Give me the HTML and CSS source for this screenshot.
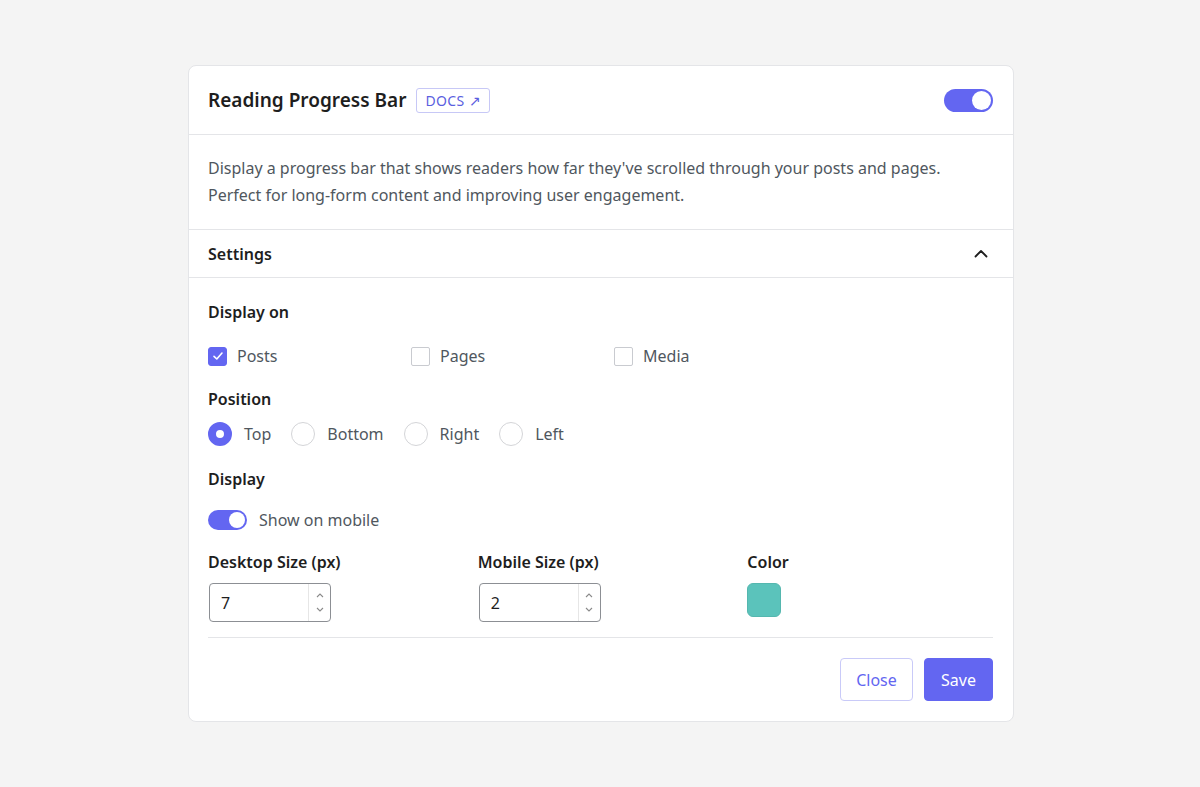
FILE: index.html
```html
<!DOCTYPE html>
<html lang="en">
<head>
    <meta charset="UTF-8">
    <meta name="viewport" content="width=device-width, initial-scale=1.0">
    <title>Reading Progress Bar</title>
    <link rel="stylesheet" href="styles.css">
</head>
<body>
    <div class="card">
        <div class="card-head">
            <div class="title-wrap">
                <h1>Reading Progress Bar</h1>
                <a class="docs" href="#">DOCS &#8599;</a>
            </div>
            <span class="switch on"><span class="knob"></span></span>
        </div>

        <p class="desc">Display a progress bar that shows readers how far they've scrolled through your posts and pages. Perfect for long-form content and improving user engagement.</p>

        <div class="settings-head">
            <span>Settings</span>
            <svg width="16" height="16" viewBox="0 0 16 16" fill="none" stroke="#1e1e1e" stroke-width="1.8" stroke-linecap="round" stroke-linejoin="round"><path d="M2.5 10.5 8 5l5.5 5.5"/></svg>
        </div>

        <div class="settings-body">
            <div class="label first">Display on</div>
            <div class="check-row">
                <label class="check"><span class="box checked"><svg width="12" height="12" viewBox="0 0 12 12" fill="none" stroke="#fff" stroke-width="1.6" stroke-linecap="round" stroke-linejoin="round"><path d="M2 6.3 4.8 9 10 3"/></svg></span>Posts</label>
                <label class="check"><span class="box"></span>Pages</label>
                <label class="check"><span class="box"></span>Media</label>
            </div>

            <div class="label">Position</div>
            <div class="radio-row">
                <label class="radio"><span class="dot checked"></span>Top</label>
                <label class="radio"><span class="dot"></span>Bottom</label>
                <label class="radio"><span class="dot"></span>Right</label>
                <label class="radio"><span class="dot"></span>Left</label>
            </div>

            <div class="label display">Display</div>
            <div class="toggle-row">
                <span class="switch small on"><span class="knob"></span></span>
                Show on mobile
            </div>

            <div class="size-grid">
                <div>
                    <div class="label">Desktop Size (px)</div>
                    <div class="number">
                        <input type="text" value="7">
                        <span class="spin">
                            <svg width="8" height="5" viewBox="0 0 8 5" fill="none" stroke="#8a8a8a" stroke-width="1.1"><path d="M1 4 4 1l3 3"/></svg>
                            <svg width="8" height="5" viewBox="0 0 8 5" fill="none" stroke="#8a8a8a" stroke-width="1.1"><path d="M1 1l3 3 3-3"/></svg>
                        </span>
                    </div>
                </div>
                <div>
                    <div class="label">Mobile Size (px)</div>
                    <div class="number">
                        <input type="text" value="2">
                        <span class="spin">
                            <svg width="8" height="5" viewBox="0 0 8 5" fill="none" stroke="#8a8a8a" stroke-width="1.1"><path d="M1 4 4 1l3 3"/></svg>
                            <svg width="8" height="5" viewBox="0 0 8 5" fill="none" stroke="#8a8a8a" stroke-width="1.1"><path d="M1 1l3 3 3-3"/></svg>
                        </span>
                    </div>
                </div>
                <div>
                    <div class="label">Color</div>
                    <span class="swatch"></span>
                </div>
            </div>

            <div class="actions">
                <button class="btn ghost">Close</button>
                <button class="btn primary">Save</button>
            </div>
        </div>
    </div>
</body>
</html>
```

FILE: styles.css
```css
:root {
    --indigo: #6366f1;
    --text: #1e1e1e;
    --muted: #50575e;
    --line: #e4e5e8;
}
* { box-sizing: border-box; margin: 0; padding: 0; }
body {
    font-family: 'Noto Sans', 'Open Sans', sans-serif;
    background: #f4f4f4;
    color: var(--text);
    display: flex; justify-content: center;
    padding: 65px 0 0 2px;
}
.card {
    width: 826px; background: #fff;
    border: 1px solid var(--line); border-radius: 8px;
}
.card-head {
    height: 69px; padding: 0 20px 0 19px;
    display: flex; align-items: center; justify-content: space-between;
    border-bottom: 1px solid var(--line);
}
.title-wrap { display: flex; align-items: center; gap: 10px; }
h1 { font-size: 19px; font-weight: 600; }
.docs {
    font-size: 14px; color: #5b5fe0; text-decoration: none;
    border: 1px solid #c7c8f6; border-radius: 3px;
    padding: 1px 8px; line-height: 21px; letter-spacing: 0.4px;
}
.switch {
    width: 49px; height: 23px; border-radius: 12px;
    background: var(--indigo); padding: 2px;
    display: inline-flex; justify-content: flex-end;
}
.switch .knob { width: 19px; height: 19px; border-radius: 50%; background: #fff; }
.switch.small { width: 39px; height: 20px; }
.switch.small .knob { width: 16px; height: 16px; }

.desc {
    padding: 20px 20px 20px 19px; font-size: 16px; line-height: 27px;
    color: var(--muted); border-bottom: 1px solid var(--line);
}
.settings-head {
    height: 48px; padding: 0 24px 0 19px;
    display: flex; align-items: center; justify-content: space-between;
    font-weight: 600; font-size: 16px;
    border-bottom: 1px solid var(--line);
}
.settings-body { padding: 22px 20px 20px 19px; }
.label { font-size: 16px; font-weight: 600; line-height: 24px; margin-top: 19px; }
.label.first { margin-top: 0; }
.label.display { margin-top: 21px; }

.check-row {
    display: grid; grid-template-columns: repeat(3, 195px); gap: 8px;
    margin-top: 20px;
}
.check { display: flex; align-items: center; gap: 10px; font-size: 16px; color: var(--muted); line-height: 24px; }
.box {
    width: 19px; height: 19px; border: 1px solid #c9cbd0; border-radius: 2px;
    display: inline-flex; align-items: center; justify-content: center;
}
.box.checked { background: var(--indigo); border-color: var(--indigo); border-radius: 3px; }

.radio-row { display: flex; gap: 20px; margin-top: 11px; }
.radio { display: flex; align-items: center; gap: 12px; font-size: 16px; color: var(--muted); }
.dot { width: 24px; height: 24px; border-radius: 50%; border: 1px solid #d4d5d8; }
.dot.checked { border: 8px solid var(--indigo); background: #fff; }

.toggle-row {
    display: flex; align-items: center; gap: 12px;
    font-size: 16px; color: var(--muted); line-height: 24px;
    margin-top: 17px;
}

.size-grid { display: grid; grid-template-columns: repeat(3, 1fr); gap: 24px; margin-top: -1px; }
.size-grid .label { margin-bottom: 9px; }
.number {
    width: 122px; height: 39px; margin-left: 1px;
    border: 1px solid #8c8f94; border-radius: 4px;
    display: flex;
}
.number input {
    width: 98px; border: none; outline: none; background: none;
    padding-left: 11px; font: inherit; font-size: 16px; color: var(--text);
}
.spin {
    width: 22px; border-left: 1px solid #e6e6e6;
    display: flex; flex-direction: column; align-items: center; justify-content: space-around;
    padding: 4px 0;
}
.swatch {
    display: block; width: 34px; height: 34px; border-radius: 6px;
    background: #5bc3bb; border: 1px solid #55b7af;
}

.actions {
    display: flex; justify-content: flex-end; gap: 11px;
    border-top: 1px solid var(--line);
    margin-top: 15px; padding-top: 20px;
}
.btn {
    height: 43px; border-radius: 4px; font: inherit; font-size: 16px;
    cursor: pointer;
}
.btn.ghost { width: 73px; background: #fff; border: 1px solid #c9caf8; color: var(--indigo); }
.btn.primary { width: 69px; background: var(--indigo); border: 1px solid var(--indigo); color: #fff; }
```
